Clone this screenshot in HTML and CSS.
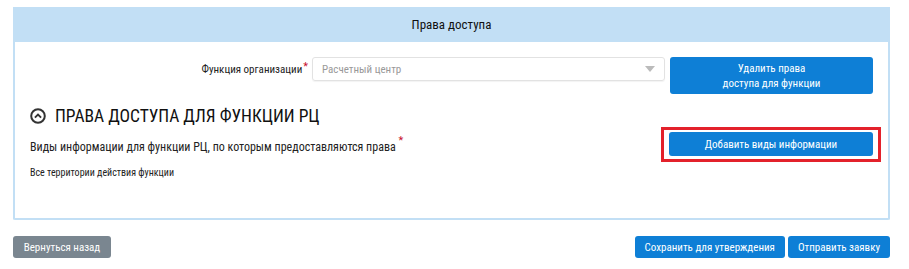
FILE: index.html
```html
<!DOCTYPE html>
<html lang="ru">

<head>
    <meta charset="UTF-8">
    <meta name="viewport" content="width=device-width, initial-scale=1.0">
    <title>Права доступа</title>
    <link rel="stylesheet" href="styles.css">
</head>

<body>

    <div class="panel">
        <div class="panel-header">Права доступа</div>
        <div class="panel-body">

            <div class="row function-row">
                <label class="field-label" for="func">Функция организации<span class="req">*</span></label>
                <div class="select" id="func">
                    <span class="select-value">Расчетный центр</span>
                    <span class="select-arrow"></span>
                </div>
                <button class="btn btn-blue delete-btn">Удалить права<br>доступа для функции</button>
            </div>

            <h2 class="section-title">
                <svg class="toggle" width="16" height="16" viewBox="0 0 16 16">
                    <circle cx="8" cy="8" r="6.8" fill="none" stroke="#333" stroke-width="2"/>
                    <path d="M4.9 9.6 L8 6.5 L11.1 9.6" fill="none" stroke="#333" stroke-width="1.9"/>
                </svg>
                ПРАВА ДОСТУПА ДЛЯ ФУНКЦИИ РЦ
            </h2>

            <div class="row info-row">
                <div class="info-label">Виды информации для функции РЦ, по которым предоставляются права <span class="req">*</span></div>
                <button class="btn btn-blue add-btn marked">Добавить виды информации</button>
            </div>

            <p class="note">Все территории действия функции</p>

        </div>
    </div>

    <div class="footer">
        <button class="btn btn-gray">Вернуться назад</button>
        <div class="footer-right">
            <button class="btn btn-blue">Сохранить для утверждения</button>
            <button class="btn btn-blue">Отправить заявку</button>
        </div>
    </div>

</body>

</html>
```

FILE: styles.css
```css
* {
    margin: 0;
    padding: 0;
    box-sizing: border-box;
}

body {
    padding: 7px 19px 0 13px;
    font-family: "Roboto Condensed", "Liberation Sans Narrow", Roboto, sans-serif;
    color: #222;
    background-color: white;
}

.panel {
    border: 2px solid #c2dff5;
    border-top: none;
    border-radius: 2px;
}

.panel-header {
    height: 35px;
    margin: 0 -2px;
    background-color: #c2dff5;
    text-align: center;
    line-height: 35px;
    font-size: 13px;
    color: #111;
}

.panel-body {
    padding: 15px 15px 40px;
}

.row {
    display: flex;
    align-items: center;
}

.function-row {
    justify-content: flex-end;
    align-items: flex-start;
}

.field-label {
    font-size: 11px;
    margin-top: 6px;
    margin-right: 4px;
}

.req {
    color: #c8102e;
    vertical-align: top;
    font-size: 11px;
    position: relative;
    top: -3px;
    margin-left: 1px;
}

.info-label .req {
    top: -6px;
    margin-left: 0;
}

.select {
    width: 353px;
    height: 24px;
    border: 1px solid #e2e2e2;
    border-radius: 3px;
    box-shadow: 0 1px 1px rgba(0, 0, 0, 0.05);
    display: flex;
    align-items: center;
    justify-content: space-between;
    padding: 0 9px;
    margin-right: 5px;
}

.select-value {
    font-size: 11px;
    color: #999;
}

.select-arrow {
    border-left: 5px solid transparent;
    border-right: 5px solid transparent;
    border-top: 6px solid #bbb;
}

.btn {
    border: none;
    outline: none;
    border-radius: 3px;
    color: white;
    font-family: inherit;
    font-size: 11px;
    cursor: pointer;
}

.btn-blue {
    background-color: #0e7fd6;
}

.btn-gray {
    background-color: #7a8690;
}

.delete-btn {
    width: 203px;
    height: 37px;
    line-height: 15px;
}

.section-title {
    display: flex;
    align-items: center;
    margin-top: 11px;
    font-size: 17.5px;
    font-weight: normal;
    color: #111;
    line-height: 22px;
}

.section-title .toggle {
    margin-right: 9px;
}

.info-row {
    justify-content: space-between;
    margin-top: 5px;
}

.info-label {
    font-size: 12px;
    margin-top: 6px;
}

.add-btn {
    width: 204px;
    height: 24px;
}

.marked {
    position: relative;
}

.marked::after {
    content: "";
    position: absolute;
    top: -5px;
    bottom: -6px;
    left: -8px;
    right: -8px;
    border: 3px solid #e3212b;
}

.note {
    margin-top: 11px;
    font-size: 10px;
}

.footer {
    display: flex;
    justify-content: space-between;
    margin-top: 16px;
}

.footer-right {
    display: flex;
    gap: 3px;
}

.footer .btn {
    height: 22px;
    padding: 0 10px;
}

.btn-gray {
    width: 98px;
}
```
